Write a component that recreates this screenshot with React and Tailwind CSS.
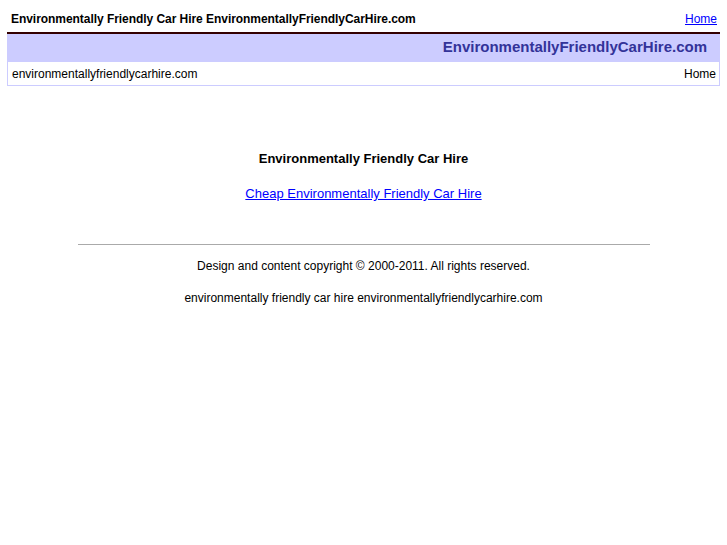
import React from 'react';

export default function App() {
    return (
        <div className="min-h-screen bg-white px-[7px] text-black" style={{ fontFamily: '"Liberation Sans", Arial, sans-serif' }}>
            {/* Top title bar */}
            <div className="flex items-center justify-between pl-[4px] pr-[3px] pt-[11px] h-[32px] pb-[6px]">
                <h1 className="text-[12px] font-bold leading-[14px] tracking-[-0.05px]">
                    Environmentally Friendly Car Hire EnvironmentallyFriendlyCarHire.com
                </h1>
                <a href="#" className="text-[12px] text-[#0000ff] underline leading-[14px]">Home</a>
            </div>

            {/* Header box */}
            <div className="border-t-2 border-[#330000] w-[713px]">
                <div className="bg-[#ccccff] h-[28px] flex items-center justify-end pr-[13px] pb-[4px]">
                    <span className="text-[15px] font-bold text-[#333399] leading-none">
                        EnvironmentallyFriendlyCarHire.com
                    </span>
                </div>
                <div className="border border-t-0 border-[#ccccff] h-[24px] flex items-center justify-between pl-[4px] pr-[3px] text-[12px]">
                    <span>environmentallyfriendlycarhire.com</span>
                    <span>Home</span>
                </div>
            </div>

            {/* Main content */}
            <div className="flex flex-col items-center text-center pt-[66px]">
                <h2 className="text-[13px] font-bold leading-[14px]">Environmentally Friendly Car Hire</h2>
                <a href="#" className="mt-[21px] text-[13px] text-[#0000ff] underline leading-[14px]">
                    Cheap Environmentally Friendly Car Hire
                </a>
            </div>

            <hr className="mx-auto mt-[43px] w-[572px] border-0 border-t border-[#aaaaaa]" />

            <div className="flex flex-col items-center text-center pt-[14px] text-[12px] leading-[14px]">
                <p>Design and content copyright © 2000-2011. All rights reserved.</p>
                <p className="mt-[18px]">environmentally friendly car hire environmentallyfriendlycarhire.com</p>
            </div>
        </div>
    );
}
